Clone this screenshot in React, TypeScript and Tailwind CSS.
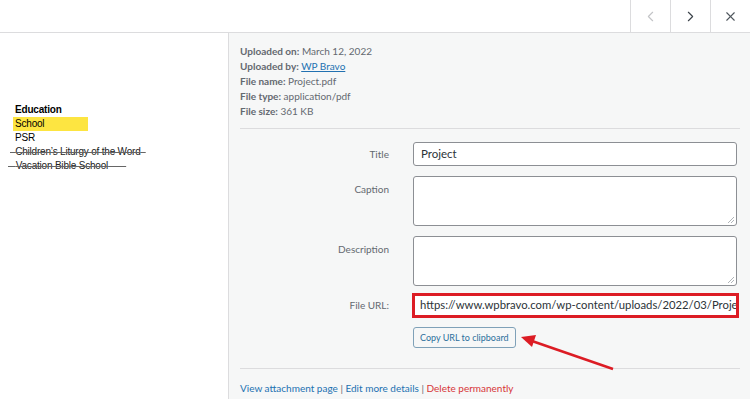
import { ChevronLeft, ChevronRight, X } from "lucide-react";

const meta = [
  { label: "Uploaded on:", value: "March 12, 2022" },
  { label: "Uploaded by:", value: "WP Bravo", link: true },
  { label: "File name:", value: "Project.pdf" },
  { label: "File type:", value: "application/pdf" },
  { label: "File size:", value: "361 KB" },
];

function FieldRow({ label, children, top }: { label: string; children: React.ReactNode; top?: boolean }) {
  return (
    <div className={`flex ${top ? "items-start" : "items-center"}`}>
      <div className={`w-[149px] shrink-0 text-right text-[10px] leading-[15px] text-[#646970] ${top ? "pt-[6px]" : ""}`}>{label}</div>
      <div className="ml-[24px] flex-1">{children}</div>
    </div>
  );
}

export default function App() {
  return (
    <div className="flex h-[399px] w-[750px] flex-col overflow-hidden bg-white font-['Lato',sans-serif]">
      {/* header */}
      <div className="flex h-[33px] shrink-0 justify-end border-b border-[#dcdcde] bg-white">
        <button className="flex w-[40px] items-center justify-center border-l border-[#dcdcde] text-[#c3c4c7]">
          <ChevronLeft size={17} strokeWidth={1.6} />
        </button>
        <button className="flex w-[40px] items-center justify-center border-l border-[#dcdcde] text-[#3c434a]">
          <ChevronRight size={17} strokeWidth={1.6} />
        </button>
        <button className="flex w-[40px] items-center justify-center border-l border-[#dcdcde] text-[#50575e]">
          <X size={15} strokeWidth={1.8} />
        </button>
      </div>

      <div className="flex flex-1">
        {/* preview */}
        <div className="w-[229px] shrink-0 border-r border-[#dcdcde] bg-white pl-[15px] pt-[70px] font-['Liberation_Sans',sans-serif] text-[10px] leading-[14px] tracking-[-0.2px] text-black">
          <div className="font-bold">Education</div>
          <div className="-ml-[2px] w-[75px] bg-[#fde541] pl-[2px]">School</div>
          <div>PSR</div>
          <div className="-ml-[5px] text-[#222]">
            <span className="line-through decoration-[#666]">{"\u00a0\u00a0"}Children’s Liturgy of the Word{"\u00a0\u00a0"}</span>
          </div>
          <div className="-ml-[7px] text-[#222]">
            <span className="line-through decoration-[#666]">{"\u00a0\u00a0\u00a0"}Vacation Bible School{"\u00a0\u00a0\u00a0\u00a0\u00a0\u00a0\u00a0"}</span>
          </div>
        </div>

        {/* details */}
        <div className="relative flex-1 bg-[#f6f7f7] pl-[11px] pr-[10px]">
          <div className="border-b border-[#dcdcde] pt-[11px] pb-[9px] text-[10px] leading-[15px] text-[#646970]">
            {meta.map((m) => (
              <div key={m.label}>
                <span className="font-bold">{m.label}</span>{" "}
                {m.link ? <span className="text-[#2271b1] underline">{m.value}</span> : m.value}
              </div>
            ))}
          </div>

          <div className="flex flex-col pt-[13px]">
            <FieldRow label="Title">
              <div className="flex h-[24px] w-[324px] items-center rounded-[3px] border border-[#8c8f94] bg-white px-[7px] text-[11.5px] text-[#2c3338]">
                Project
              </div>
            </FieldRow>
            <div className="mt-[10px]">
              <FieldRow label="Caption" top>
                <div className="relative h-[50px] w-[324px] rounded-[3px] border border-[#8c8f94] bg-white">
                  <Grip />
                </div>
              </FieldRow>
            </div>
            <div className="mt-[10px]">
              <FieldRow label="Description" top>
                <div className="relative h-[50px] w-[324px] rounded-[3px] border border-[#8c8f94] bg-white">
                  <Grip />
                </div>
              </FieldRow>
            </div>
            <div className="mt-[7px]">
              <FieldRow label="File URL:">
                <div className="-ml-[1px] flex h-[25px] w-[327px] items-center overflow-hidden whitespace-nowrap border-[3px] border-[#dc1c24] bg-white pl-[5px] text-[11.3px] text-[#2c3338]">
                  https://www.wpbravo.com/wp-content/uploads/2022/03/Project.pdf
                </div>
              </FieldRow>
            </div>
            <div className="mt-[9px] flex pl-[173px]">
              <div className="flex h-[21px] items-center rounded-[3px] border border-[#7fa1b8] bg-[#f6f7f7] px-[6px] text-[9px] text-[#2c6f9c]">
                Copy URL to clipboard
              </div>
            </div>
          </div>

          <div className="mt-[20px] border-t border-[#dcdcde] pt-[12px] text-[10px] leading-[15px] text-[#2271b1]">
            View attachment page <span className="text-[#646970]">|</span> Edit more details{" "}
            <span className="text-[#646970]">|</span> <span className="text-[#d63638]">Delete permanently</span>
          </div>

          {/* annotation arrow */}
          <svg className="absolute left-0 top-0" width="520" height="366" viewBox="230 33 520 366">
            <line x1="614" y1="369" x2="533" y2="341" stroke="#dc1c24" strokeWidth="2.5" />
            <polygon points="522,337 537,335 533,347" fill="#dc1c24" />
          </svg>
        </div>
      </div>
    </div>
  );
}

function Grip() {
  return (
    <svg className="absolute bottom-[1px] right-[1px]" width="8" height="8" viewBox="0 0 8 8">
      <line x1="7" y1="1" x2="1" y2="7" stroke="#9ca2a7" strokeWidth="0.8" />
      <line x1="7" y1="4" x2="4" y2="7" stroke="#9ca2a7" strokeWidth="0.8" />
    </svg>
  );
}
